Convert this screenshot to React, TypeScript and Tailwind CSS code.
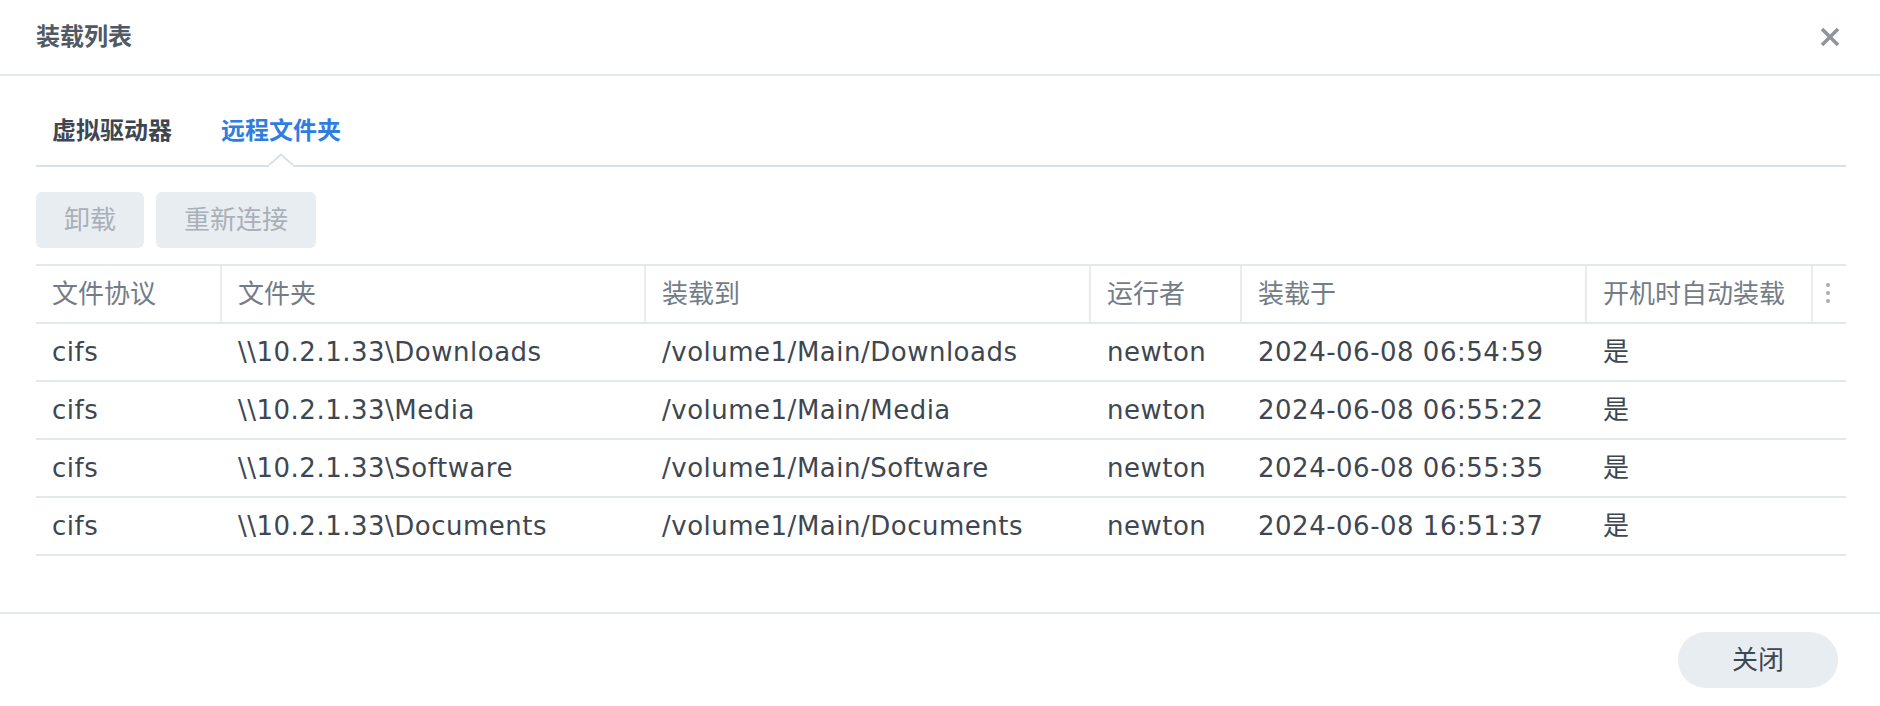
import React from 'react';

type Mount = {
  protocol: string;
  folder: string;
  target: string;
  user: string;
  mountedAt: string;
  autoMount: string;
};

const mounts: Mount[] = [
  { protocol: 'cifs', folder: '\\\\10.2.1.33\\Downloads', target: '/volume1/Main/Downloads', user: 'newton', mountedAt: '2024-06-08 06:54:59', autoMount: '是' },
  { protocol: 'cifs', folder: '\\\\10.2.1.33\\Media', target: '/volume1/Main/Media', user: 'newton', mountedAt: '2024-06-08 06:55:22', autoMount: '是' },
  { protocol: 'cifs', folder: '\\\\10.2.1.33\\Software', target: '/volume1/Main/Software', user: 'newton', mountedAt: '2024-06-08 06:55:35', autoMount: '是' },
  { protocol: 'cifs', folder: '\\\\10.2.1.33\\Documents', target: '/volume1/Main/Documents', user: 'newton', mountedAt: '2024-06-08 16:51:37', autoMount: '是' },
];

const columns = ['文件协议', '文件夹', '装载到', '运行者', '装载于', '开机时自动装载'];

const grid = 'grid grid-cols-[186px_424px_445px_151px_345px_226px_1fr]';

export default function App() {
  return (
    <div className="w-[1880px] h-[706px] bg-white flex flex-col text-[#3e4751] font-['DejaVu_Sans','Noto_Sans_CJK_SC',sans-serif]">
      {/* Header */}
      <div className="h-[76px] shrink-0 border-b-2 border-[#e3e8ef] flex items-center justify-between pl-9 pr-10">
        <h1 className="text-[24px] font-bold leading-[34px] text-[#505a64]">装载列表</h1>
        <button className="w-5 h-5 flex items-center justify-center">
          <svg width="20" height="20" viewBox="0 0 20 20" fill="none">
            <path d="M2 2L18 18M18 2L2 18" stroke="#8e959c" strokeWidth={3.6} />
          </svg>
        </button>
      </div>

      {/* Body */}
      <div className="flex-1 pl-9 pr-[34px]">
        {/* Tabs */}
        <div className="flex gap-[49px] pl-4 border-b-2 border-[#d9e0e9]">
          <button className="pt-[38px] pb-[17px] text-[24px] leading-[34px] font-bold text-[#3e4751]">
            虚拟驱动器
          </button>
          <button className="relative pt-[38px] pb-[17px] text-[24px] leading-[34px] font-bold text-[#2f7de1]">
            远程文件夹
            <svg
              className="absolute left-1/2 -translate-x-1/2 -bottom-[2px]"
              width="26"
              height="14"
              viewBox="0 0 26 14"
            >
              <polygon points="0,14 13,1.5 26,14" fill="white" />
              <polyline points="0,13 13,1.5 26,13" fill="none" stroke="#d9e0e9" strokeWidth={2} />
              <rect x="0" y="12" width="26" height="2" fill="white" />
              <rect x="0" y="12" width="1" height="2" fill="#d9e0e9" />
              <rect x="25" y="12" width="1" height="2" fill="#d9e0e9" />
            </svg>
          </button>
        </div>

        {/* Toolbar */}
        <div className="flex gap-3 mt-[25px]">
          <button className="h-14 px-7 rounded-md bg-[#e8edf2] text-[26px] text-[#a9b0b8]">卸载</button>
          <button className="h-14 px-7 rounded-md bg-[#e8edf2] text-[26px] text-[#a9b0b8]">重新连接</button>
        </div>

        {/* Table */}
        <div className="mt-4 border-t-2 border-[#e3e8ef] text-[26px]">
          <div className={`${grid} h-[58px] border-b-2 border-[#e3e8ef] text-[#737d87]`}>
            {columns.map((c) => (
              <div key={c} className="flex items-center pl-4 border-r-2 border-[#e8ecf1] whitespace-nowrap">
                {c}
              </div>
            ))}
            <div className="flex flex-col items-start justify-center gap-[4px] pl-[13px] pb-[2px]">
              <span className="w-[4px] h-[4px] rounded-full bg-[#a7adb4]" />
              <span className="w-[4px] h-[4px] rounded-full bg-[#a7adb4]" />
              <span className="w-[4px] h-[4px] rounded-full bg-[#a7adb4]" />
            </div>
          </div>
          {mounts.map((m) => (
            <div key={m.target} className={`${grid} h-[58px] border-b-2 border-[#e3e8ef] text-[#3e4751] tracking-[0.5px]`}>
              <div className="flex items-center pl-4 whitespace-nowrap">{m.protocol}</div>
              <div className="flex items-center pl-4 whitespace-nowrap">{m.folder}</div>
              <div className="flex items-center pl-4 whitespace-nowrap">{m.target}</div>
              <div className="flex items-center pl-4 whitespace-nowrap">{m.user}</div>
              <div className="flex items-center pl-4 whitespace-nowrap">{m.mountedAt}</div>
              <div className="flex items-center pl-4 whitespace-nowrap">{m.autoMount}</div>
              <div />
            </div>
          ))}
        </div>
      </div>

      {/* Footer */}
      <div className="h-[94px] shrink-0 border-t-2 border-[#e3e8ef] flex items-center justify-end pr-[42px]">
        <button className="w-40 h-14 rounded-full bg-[#e8edf2] text-[26px] text-[#3e4751]">关闭</button>
      </div>
    </div>
  );
}
